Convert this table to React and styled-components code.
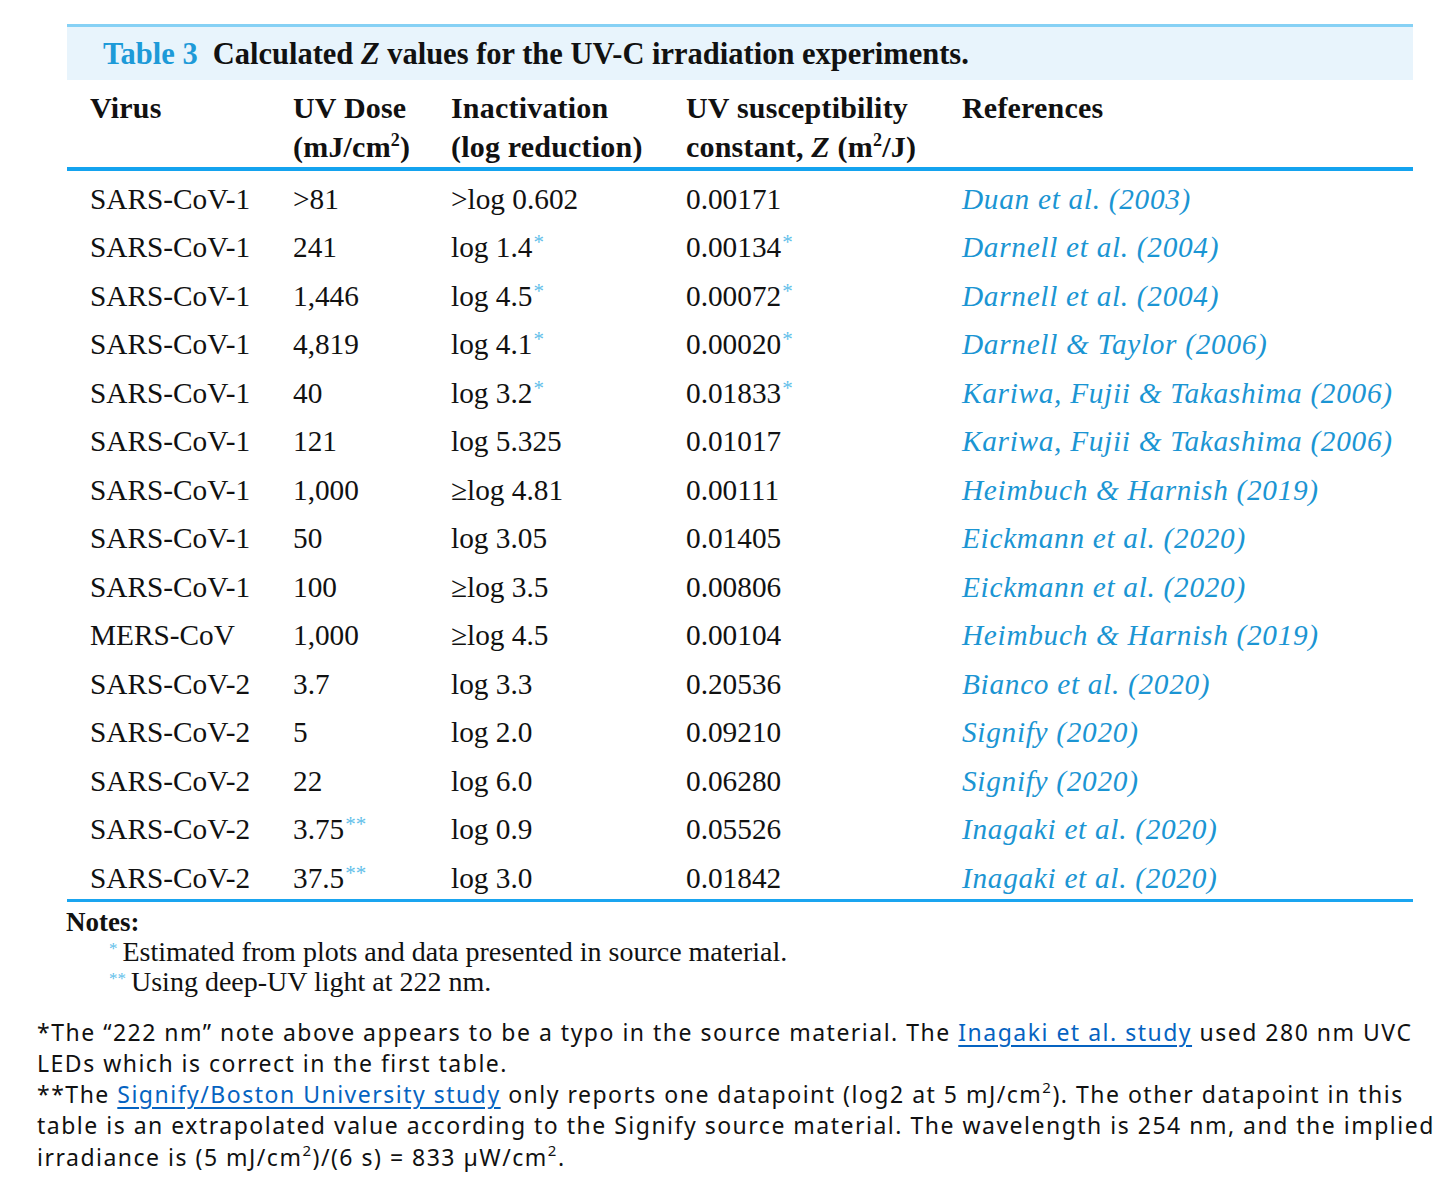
import React from "react";
import styled, { createGlobalStyle } from "styled-components";

const Global = createGlobalStyle`
  html, body { margin: 0; padding: 0; background: #fff; }
  body { font-family: "Liberation Serif", "Times New Roman", serif; color: #111; }
`;

const Page = styled.div`
  width: 1448px;
  padding-top: 24px;
`;

const TableBlock = styled.div`
  margin-left: 67px;
  width: 1346px;
  font-family: "Liberation Serif", serif;
`;

const Caption = styled.div`
  border-top: 3px solid #86d1f5;
  background: #e8f4fc;
  height: 56px;
  box-sizing: border-box;
  padding-top: 2px;
  display: flex;
  align-items: center;
  padding-left: 36px;
  font-weight: bold;
  font-size: 30.5px;
  color: #111;
`;

const CaptionLabel = styled.span`
  color: #1d9ad8;
  margin-right: 15px;
`;

const Em = styled.i``;

const cols = "203px 158px 235px 276px 1fr";

const HeaderRow = styled.div`
  display: grid;
  grid-template-columns: ${cols};
  padding: 8px 0 0 23px;
  height: 91px;
  box-sizing: border-box;
  border-bottom: 4px solid #14a3ef;
  font-weight: bold;
  font-size: 30px;
  letter-spacing: 0.2px;
  line-height: 39px;
`;

const HeadCell = styled.div`
  white-space: nowrap;
`;

const Body = styled.div`
  border-bottom: 3px solid #1aa5f0;
`;

const Row = styled.div`
  display: grid;
  grid-template-columns: ${cols};
  padding: 7.5px 0 0 23px;
  box-sizing: border-box;
  height: 48.5px;
  align-items: center;
  font-size: 29.3px;
`;

const Cell = styled.div`
  white-space: nowrap;
`;

const RefCell = styled.div`
  white-space: nowrap;
  font-style: italic;
  color: #1b95d3;
  letter-spacing: 0.7px;
`;

const Star = styled.sup`
  color: #62c0ea;
  font-size: 21px;
  vertical-align: 8px;
  line-height: 0;
  margin-left: 1px;
`;

const Sup = styled.sup`
  font-size: 18px;
  vertical-align: 11px;
  line-height: 0;
`;

const Notes = styled.div`
  padding-top: 5px;
  font-size: 28px;
  line-height: 30px;
`;

const NotesTitle = styled.div`
  font-weight: bold;
  font-size: 27px;
  margin-left: -1px;
`;

const NoteLine = styled.div`
  padding-left: 42px;
`;

const NoteStar = styled.span`
  color: #62c0ea;
  font-size: 17px;
  vertical-align: 7px;
  line-height: 0;
  margin-right: 5px;
`;

const Footer = styled.div`
  margin: 20px 0 0 37px;
  font-family: "Noto Sans", sans-serif;
  font-size: 23px;
  letter-spacing: 1.5px;
  line-height: 31.3px;
  color: #111;
  white-space: nowrap;
`;

const Link = styled.a`
  color: #0563c1;
  text-decoration: underline;
  text-underline-offset: 4px;
`;

const FSup = styled.sup`
  font-size: 15px;
  vertical-align: 10px;
  line-height: 0;
`;

const rows = [
  ["SARS-CoV-1", ">81", "", ">log 0.602", "", "0.00171", "", "Duan et al. (2003)"],
  ["SARS-CoV-1", "241", "", "log 1.4", "*", "0.00134", "*", "Darnell et al. (2004)"],
  ["SARS-CoV-1", "1,446", "", "log 4.5", "*", "0.00072", "*", "Darnell et al. (2004)"],
  ["SARS-CoV-1", "4,819", "", "log 4.1", "*", "0.00020", "*", "Darnell & Taylor (2006)"],
  ["SARS-CoV-1", "40", "", "log 3.2", "*", "0.01833", "*", "Kariwa, Fujii & Takashima (2006)"],
  ["SARS-CoV-1", "121", "", "log 5.325", "", "0.01017", "", "Kariwa, Fujii & Takashima (2006)"],
  ["SARS-CoV-1", "1,000", "", "≥log 4.81", "", "0.00111", "", "Heimbuch & Harnish (2019)"],
  ["SARS-CoV-1", "50", "", "log 3.05", "", "0.01405", "", "Eickmann et al. (2020)"],
  ["SARS-CoV-1", "100", "", "≥log 3.5", "", "0.00806", "", "Eickmann et al. (2020)"],
  ["MERS-CoV", "1,000", "", "≥log 4.5", "", "0.00104", "", "Heimbuch & Harnish (2019)"],
  ["SARS-CoV-2", "3.7", "", "log 3.3", "", "0.20536", "", "Bianco et al. (2020)"],
  ["SARS-CoV-2", "5", "", "log 2.0", "", "0.09210", "", "Signify (2020)"],
  ["SARS-CoV-2", "22", "", "log 6.0", "", "0.06280", "", "Signify (2020)"],
  ["SARS-CoV-2", "3.75", "**", "log 0.9", "", "0.05526", "", "Inagaki et al. (2020)"],
  ["SARS-CoV-2", "37.5", "**", "log 3.0", "", "0.01842", "", "Inagaki et al. (2020)"],
];

export default function App() {
  return (
    <Page>
      <Global />
      <TableBlock>
        <Caption>
          <CaptionLabel>Table 3</CaptionLabel>
          <span>
            Calculated <Em>Z</Em> values for the UV-C irradiation experiments.
          </span>
        </Caption>
        <HeaderRow>
          <HeadCell>Virus</HeadCell>
          <HeadCell>
            UV Dose
            <br />
            (mJ/cm<Sup>2</Sup>)
          </HeadCell>
          <HeadCell>
            Inactivation
            <br />
            (log reduction)
          </HeadCell>
          <HeadCell>
            UV susceptibility
            <br />
            constant, <Em>Z</Em> (m<Sup>2</Sup>/J)
          </HeadCell>
          <HeadCell>References</HeadCell>
        </HeaderRow>
        <Body>
          {rows.map((r, i) => (
            <Row key={i}>
              <Cell>{r[0]}</Cell>
              <Cell>
                {r[1]}
                {r[2] && <Star>{r[2]}</Star>}
              </Cell>
              <Cell>
                {r[3]}
                {r[4] && <Star>{r[4]}</Star>}
              </Cell>
              <Cell>
                {r[5]}
                {r[6] && <Star>{r[6]}</Star>}
              </Cell>
              <RefCell>{r[7]}</RefCell>
            </Row>
          ))}
        </Body>
        <Notes>
          <NotesTitle>Notes:</NotesTitle>
          <NoteLine>
            <NoteStar>*</NoteStar>Estimated from plots and data presented in source material.
          </NoteLine>
          <NoteLine>
            <NoteStar>**</NoteStar>Using deep-UV light at 222 nm.
          </NoteLine>
        </Notes>
      </TableBlock>
      <Footer>
        *The “222 nm” note above appears to be a typo in the source material. The{" "}
        <Link href="#">Inagaki et al. study</Link> used 280 nm UVC
        <br />
        LEDs which is correct in the first table.
        <br />
        **The <Link href="#">Signify/Boston University study</Link> only reports one datapoint
        (log2 at 5 mJ/cm<FSup>2</FSup>). The other datapoint in this
        <br />
        table is an extrapolated value according to the Signify source material. The wavelength
        is 254 nm, and the implied
        <br />
        irradiance is (5 mJ/cm<FSup>2</FSup>)/(6 s) = 833 µW/cm<FSup>2</FSup>.
      </Footer>
    </Page>
  );
}
